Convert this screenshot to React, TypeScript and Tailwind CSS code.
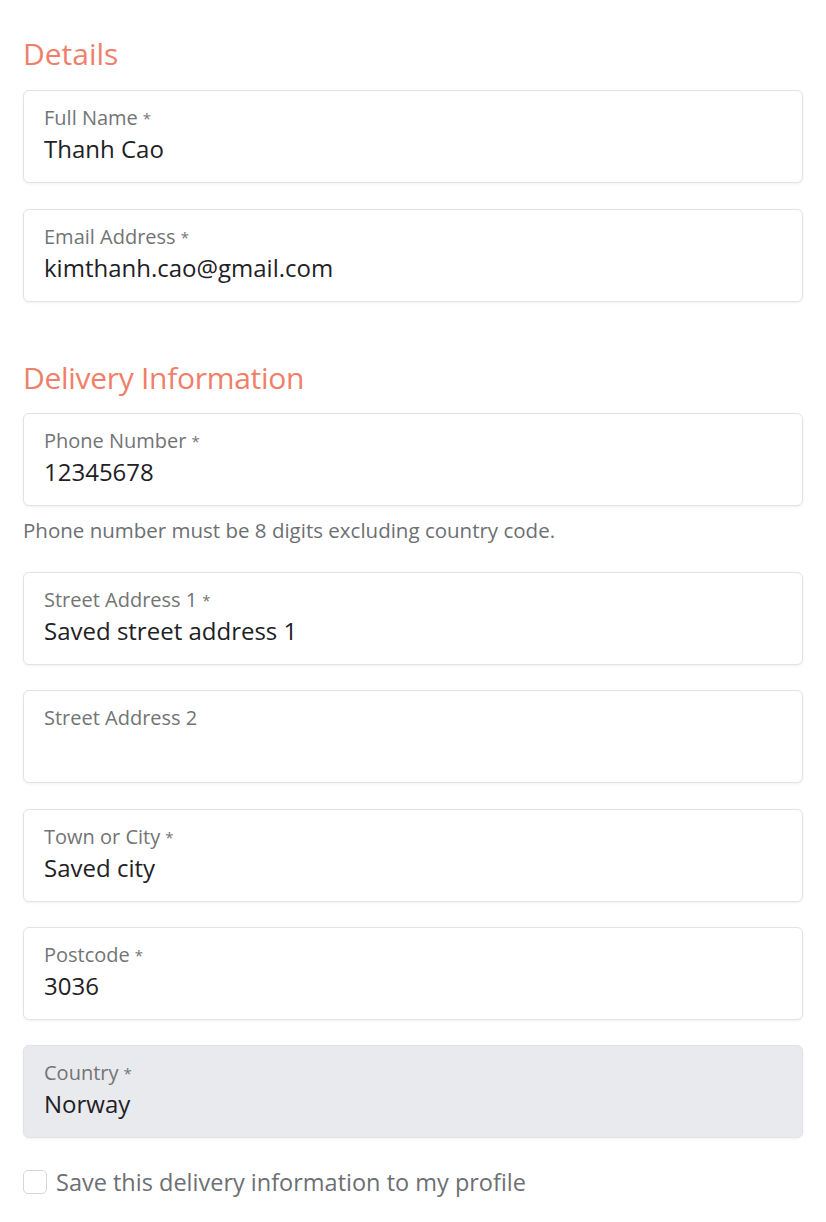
import React from "react";

/* ------------------------------------------------------------------ */
/* Floating-label field                                               */
/* ------------------------------------------------------------------ */

interface FieldProps {
  label: string;
  value?: string;
  required?: boolean;
  disabled?: boolean;
}

function Field({ label, value = "", required, disabled }: FieldProps) {
  return (
    <div
      className={`h-[93px] rounded-[6px] border border-[#e2e3e5] shadow-[0_1px_3px_rgba(0,0,0,0.06)] px-[20px] pt-[14px] ${
        disabled ? "bg-[#e9eaed]" : "bg-white"
      }`}
    >
      <div className="text-[20px] leading-[26px] text-[#727476]">
        {label}
        {required && <span className="text-[15px] align-top ml-[5px]">*</span>}
      </div>
      <div className="text-[24px] leading-[32px] mt-[2px] text-[#1e2125]">{value}</div>
    </div>
  );
}

/* ------------------------------------------------------------------ */
/* Page                                                               */
/* ------------------------------------------------------------------ */

export default function App() {
  return (
    <div
      className="min-h-screen bg-white px-[23px] pt-[34px] text-[#212529]"
      style={{ fontFamily: '"Open Sans", "Noto Sans", sans-serif' }}
    >
      {/* -------------------------- details -------------------------- */}
      <h2 className="text-[30px] leading-[40px] text-[#ef7f6a] mb-[16px]">Details</h2>
      <div className="flex flex-col gap-[26px]">
        <Field label="Full Name" value="Thanh Cao" required />
        <Field label="Email Address" value="kimthanh.cao@gmail.com" required />
      </div>

      {/* ---------------------- delivery info ------------------------ */}
      <h2 className="text-[30px] leading-[40px] text-[#ef7f6a] mt-[56px] mb-[15px] tracking-[-0.3px]">
        Delivery Information
      </h2>
      <Field label="Phone Number" value="12345678" required />
      <p className="text-[20.5px] leading-[26px] text-[#6c6f73] mt-[11px] mb-[29px]">
        Phone number must be 8 digits excluding country code.
      </p>
      <div className="flex flex-col gap-[25.25px]">
        <Field label="Street Address 1" value="Saved street address 1" required />
        <Field label="Street Address 2" />
        <Field label="Town or City" value="Saved city" required />
        <Field label="Postcode" value="3036" required />
        <Field label="Country" value="Norway" required disabled />
      </div>

      {/* ------------------------- checkbox -------------------------- */}
      <label className="flex items-center gap-[9px] mt-[29px]">
        <span className="w-[24px] h-[24px] rounded-[5px] border border-[#d5d7da] bg-white" />
        <span className="text-[23.5px] leading-[30px] text-[#6c6f73]">
          Save this delivery information to my profile
        </span>
      </label>
    </div>
  );
}
